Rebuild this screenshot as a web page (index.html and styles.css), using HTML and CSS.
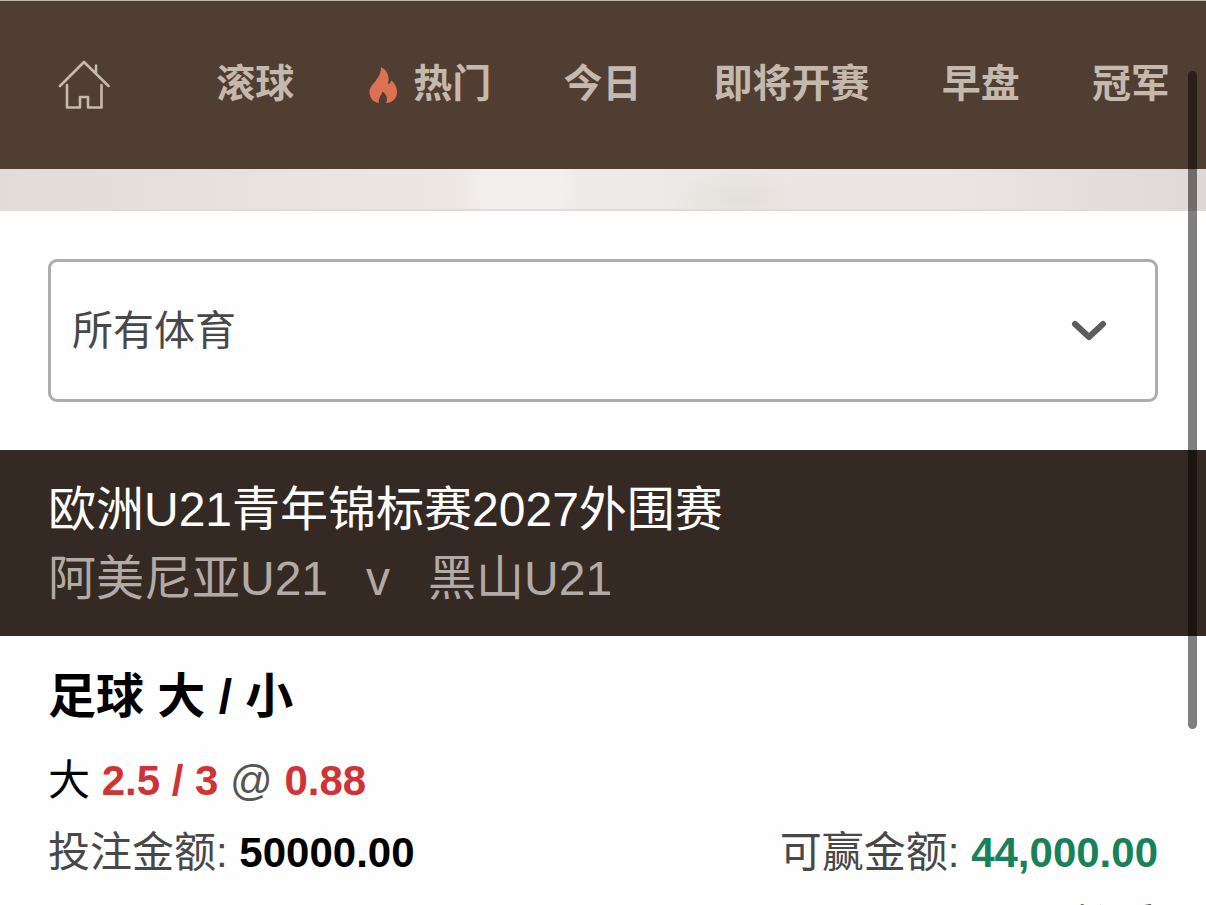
FILE: index.html
```html
<!DOCTYPE html>
<html lang="zh-CN">
<head>
  <meta charset="UTF-8" />
  <meta name="viewport" content="width=device-width, initial-scale=1" />
  <title>体育</title>
  <link rel="stylesheet" href="styles.css">
</head>
<body>
  <nav class="nav">
    <a href="#" class="home" aria-label="首页">
      <svg width="52" height="50" viewBox="0 0 52 50" fill="none" stroke="currentColor" stroke-width="2.600" stroke-linecap="round" stroke-linejoin="round">
        <path d="M2 26L26 2L50.500 26M38 5.500V13.500"/>
        <path d="M9 25V47.500H22V37H30V47.500H43.500V25"/>
      </svg>
    </a>
    <a href="#">滚球</a>
    <a href="#" class="hot">
      <svg class="flame" width="28" height="38" viewBox="0 0 28 38" fill="currentColor">
        <path d="M12 1C18 4 21 10 19 18C21 18 22 16 22 14.500C26 17 28 22 28 26C28 32 24 36.500 17 37C19 33 18 29 13.500 25.500C13 29 9 31 10 37C4 36 0.500 32 0.500 26C0.500 18 12 14 12 1Z"/>
      </svg>
      热门
    </a>
    <a href="#">今日</a>
    <a href="#">即将开赛</a>
    <a href="#">早盘</a>
    <a href="#">冠军</a>
  </nav>

  <div class="banner"></div>

  <div class="filter">
    <select class="sport" aria-label="体育项目">
      <option>所有体育</option>
    </select>
    <svg class="chevron" width="36" height="22" viewBox="0 0 36 22" fill="none" stroke="currentColor" stroke-width="6" stroke-linecap="round" stroke-linejoin="round">
      <path d="M4 4L18 17L32 4"/>
    </svg>
  </div>

  <header class="event">
    <div class="league">欧洲U21青年锦标赛2027外围赛</div>
    <div class="teams"><span>阿美尼亚U21</span><span>v</span><span>黑山U21</span></div>
  </header>

  <main class="bet">
    <h2>足球 大 / 小</h2>
    <p class="pick">大 <b class="red">2.5 / 3</b> <span class="at">@</span> <b class="red">0.88</b></p>
    <div class="amounts">
      <div>投注金额: <b class="stake">50000.00</b></div>
      <div>可赢金额: <b class="win">44,000.00</b></div>
    </div>
    <div class="status">已接受</div>
  </main>

  <div class="scrollbar"></div>
</body>
</html>
```

FILE: styles.css
```css
* {
  box-sizing: border-box;
}
html {
  height: 100%;
  overflow: hidden;
}
body {
  height: 100%;
  margin: 0;
  overflow: hidden;
  background: #fefefe;
  font-family: "Liberation Sans", "Noto Sans CJK SC", sans-serif;
  color: #000;
}
.nav {
  display: flex;
  align-items: center;
  justify-content: space-between;
  height: 169px;
  padding: 0 36px 0 58px;
  border-top: 1px solid #c4b8ac;
  background: #503e32;
}
.nav a {
  display: flex;
  align-items: center;
  padding-bottom: 10px;
  color: #c5b8ad;
  font-family: "Noto Sans CJK SC", sans-serif;
  font-size: 39px;
  font-weight: 700;
  line-height: 48px;
  text-decoration: none;
}
.nav .home {
  margin-right: 34px;
  padding-bottom: 0;
}
.nav .hot {
  gap: 16px;
  padding-left: 3px;
}
.flame {
  margin-top: 10px;
  color: #dc7153;
}
.banner {
  height: 42px;
  border-bottom: 2px solid #dfdcda;
  background:
    radial-gradient(ellipse 60px 70px at 522px 20px, #f2efee 70%, rgba(242, 239, 238, 0)),
    radial-gradient(ellipse 70px 30px at 740px 30px, rgba(222, 218, 214, 0.6), rgba(222, 218, 214, 0)),
    linear-gradient(90deg, #e2dcd9, #ece7e3 36%, #eeebe8 50%, #ebe7e4 62%, #ebe6e3 78%, #ded9d6);
}
.filter {
  position: relative;
  padding: 48px;
}
.sport {
  display: block;
  width: 100%;
  height: 143px;
  padding: 0 21px;
  border: 3px solid #adadad;
  border-radius: 9px;
  background: #fefefe;
  appearance: none;
  color: #484848;
  font: inherit;
  font-size: 41px;
}
.chevron {
  position: absolute;
  top: 50%;
  right: 99px;
  margin-top: -11px;
  color: #5c5c5c;
  pointer-events: none;
}
.event {
  height: 186px;
  padding: 25px 48px;
  background: #352a23;
  color: #fff;
  font-size: 48px;
  line-height: 69px;
}
.teams {
  display: flex;
  gap: 38px;
  color: #b3aaa5;
}
.bet {
  padding: 25px 48px;
}
.bet h2 {
  margin: 0;
  font-size: 48px;
  line-height: 72px;
}
.pick {
  margin: 12px 0 0;
  font-size: 42px;
  line-height: 72px;
}
.red {
  color: #d03336;
}
.at {
  color: #555;
}
.amounts {
  display: flex;
  justify-content: space-between;
  color: #484848;
  font-size: 42px;
  line-height: 72px;
}
.stake {
  color: #000;
}
.win {
  color: #17825a;
}
.status {
  color: #484848;
  font-size: 42px;
  line-height: 74px;
  text-align: right;
}
.scrollbar {
  position: fixed;
  top: 71px;
  right: 9px;
  width: 9px;
  height: 658px;
  border-radius: 5px;
  background: rgba(0, 0, 0, 0.5);
}
```
